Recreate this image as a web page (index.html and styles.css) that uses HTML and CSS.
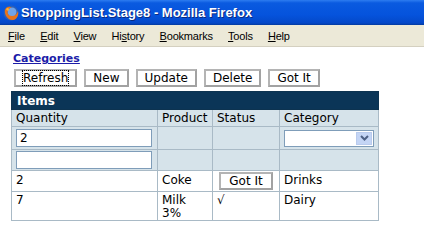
FILE: index.html
```html
<!DOCTYPE html>
<html lang="en">
<head>
  <meta charset="UTF-8" />
  <title>ShoppingList.Stage8 - Mozilla Firefox</title>
  <link rel="stylesheet" href="styles.css">
</head>
<body>
  <!-- window title -->
  <div class="titlebar">
    <svg class="ff-icon" width="16" height="16" viewBox="0 0 16 16">
      <circle cx="8" cy="8" r="7.5" fill="#2a5fb8"/>
      <circle cx="9" cy="7" r="4.5" fill="#6fa3e8"/>
      <path d="M2 5 C1 10 5 15.5 10 15 C14 14.5 16 10 15 6 C14 9 12 11 9 11 C5 11 4 8 5 5 C6 3 8 2.5 9 2.5 C6 1 3 2 2 5 Z" fill="#e8731a"/>
      <path d="M3 4 C4 6 5 6 6 5 C6 3 5 2 3 4 Z" fill="#f7b13a"/>
    </svg>
    <span class="title">ShoppingList.Stage8 - Mozilla Firefox</span>
  </div>

  <!-- menu -->
  <div class="menubar">
    <span class="menu"><u>F</u>ile</span>
    <span class="menu"><u>E</u>dit</span>
    <span class="menu"><u>V</u>iew</span>
    <span class="menu">Hi<u>s</u>tory</span>
    <span class="menu"><u>B</u>ookmarks</span>
    <span class="menu"><u>T</u>ools</span>
    <span class="menu"><u>H</u>elp</span>
  </div>

  <!-- page -->
  <div class="page">
    <a class="cat-link" href="#">Categories</a>
    <div class="toolbar">
      <button class="btn btn-focus"><span>Refresh</span></button>
      <button class="btn">New</button>
      <button class="btn">Update</button>
      <button class="btn">Delete</button>
      <button class="btn">Got It</button>
    </div>

    <table class="items">
      <tr class="caption-row"><th colspan="4">Items</th></tr>
      <tr class="head-row">
        <td class="c-qty">Quantity</td>
        <td class="c-prod">Product</td>
        <td class="c-stat">Status</td>
        <td class="c-cat">Category</td>
      </tr>
      <tr class="edit-row">
        <td><div class="field">2</div></td>
        <td></td>
        <td></td>
        <td>
          <div class="select">
            <span class="select-btn">
              <svg width="9" height="6" viewBox="0 0 9 6"><path d="M1 1 L4.5 4.5 L8 1" fill="none" stroke="#4d6185" stroke-width="2"/></svg>
            </span>
          </div>
        </td>
      </tr>
      <tr class="edit-row edit-row2">
        <td><div class="field"></div></td>
        <td></td>
        <td></td>
        <td></td>
      </tr>
      <tr class="data-row">
        <td>2</td>
        <td>Coke</td>
        <td><button class="btn btn-small">Got It</button></td>
        <td>Drinks</td>
      </tr>
      <tr class="data-row tall">
        <td>7</td>
        <td>Milk<br>3%</td>
        <td>√</td>
        <td>Dairy</td>
      </tr>
    </table>
  </div>
</body>
</html>
```

FILE: styles.css
```css
* { box-sizing: border-box; }
body {
  margin: 0;
  width: 424px;
  height: 246px;
  overflow: hidden;
  background: #fff;
  font-family: 'DejaVu Sans', sans-serif;
  color: #000;
}
.titlebar {
  height: 25px;
  display: flex;
  align-items: center;
  padding-left: 3px;
  background: linear-gradient(#2d7cf0 0%, #0a5ae0 12%, #0553dc 60%, #0448c8 92%, #033a9e 100%);
}
.ff-icon { margin-right: 2px; }
.title {
  font-family: 'Liberation Sans', sans-serif;
  font-weight: bold;
  font-size: 13px;
  color: #fff;
  text-shadow: 1px 1px 0 #0a2a80;
}
.menubar {
  height: 22px;
  display: flex;
  align-items: center;
  background: #ece9d8;
  border-bottom: 1px solid #d4d0c0;
  font-family: 'Liberation Sans', sans-serif;
  font-size: 11px;
  letter-spacing: -0.2px;
}
.menu { padding: 0 7.6px; }
.menu:first-child { padding-left: 8px; }
.page { padding: 0 0 0 11px; }
.cat-link {
  display: inline-block;
  margin-left: 2px;
  font-size: 11px;
  font-weight: bold;
  color: #1c1ca8;
  line-height: 13px;
}
.toolbar {
  display: flex;
  gap: 7px;
  margin: 3px 0 4px 3px;
}
.btn {
  height: 18px;
  padding: 0 7px;
  border: 2px solid #a2a2a2;
  border-top-color: #b4b4b4;
  border-left-color: #b4b4b4;
  background: #fff;
  font-family: 'DejaVu Sans', sans-serif;
  font-size: 12px;
  line-height: 12px;
  color: #000;
}
.btn-focus span { outline: 1px dotted #000; }
.items {
  border-collapse: collapse;
  width: 368px;
  border: 1px solid #0d3350;
  font-size: 12px;
}
.items td {
  border: 1px solid #a9bac6;
  padding: 0 4px;
  vertical-align: top;
}
.caption-row th {
  height: 18px;
  background: #0b3557;
  color: #fff;
  text-align: left;
  font-size: 12px;
  font-weight: bold;
  padding: 0 5px;
  border: 1px solid #0d3350;
}
.head-row td {
  height: 17px;
  background: #d6e3ea;
  line-height: 16px;
}
.c-qty { width: 146px; }
.c-prod { width: 55px; }
.c-stat { width: 67px; }
.edit-row td {
  height: 23px;
  background: #d6e3ea;
  vertical-align: middle;
}
.edit-row2 td { height: 21px; }
.field {
  height: 18px;
  width: 136px;
  border: 1px solid #7f9db9;
  background: #fff;
  padding: 1px 3px;
  font-size: 12px;
  line-height: 15px;
}
.select {
  height: 17px;
  width: 90px;
  border: 1px solid #7f9db9;
  background: #fff;
  display: flex;
  justify-content: flex-end;
  padding: 1px;
}
.select-btn {
  width: 16px;
  height: 13px;
  background: #c4d5f5;
  border: 1px solid #b9cbed;
  display: flex;
  align-items: center;
  justify-content: center;
}
.data-row td {
  height: 21px;
  line-height: 17px;
  padding-top: 1px;
}
.data-row.tall td { height: 29px; line-height: 13px; padding-top: 2px; }
.btn-small {
  height: 18px;
  width: 54px;
  margin: 0 0 0 2px;
  padding: 0;
}
```
